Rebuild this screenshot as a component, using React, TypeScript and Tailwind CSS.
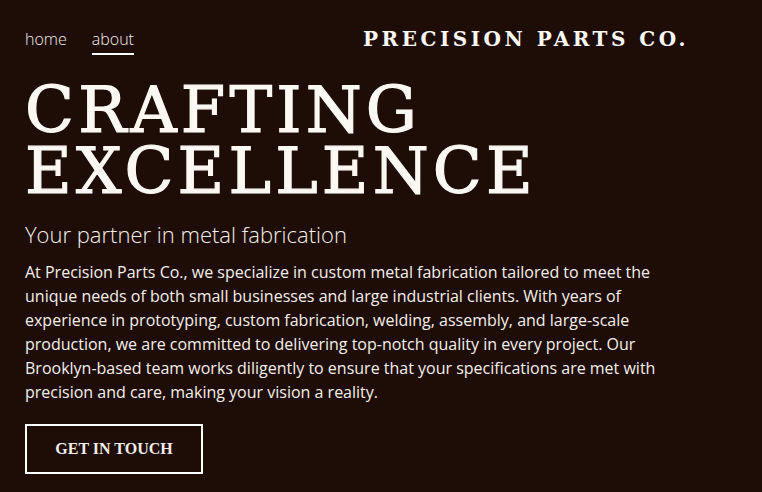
export default function App() {
  return (
    <div className="min-h-[492px] w-full overflow-hidden bg-[#1e0d06] text-white">
      <header className="flex items-start pl-[25px] pr-[73px] pt-[28px]">
        <nav className="flex gap-[25px] font-['Open_Sans',sans-serif] text-[16px] font-light text-[#f3ece6]">
          <a className="leading-[22px]">home</a>
          <a className="border-b-2 border-white pb-[3px] leading-[22px]">about</a>
        </nav>
        <div className="ml-auto font-['DejaVu_Serif',serif] text-[20px] font-bold leading-[22px] tracking-[0.175em] text-[#fbf8f4]">
          PRECISION PARTS CO.
        </div>
      </header>

      <main className="pl-[25px] pr-[40px]">
        <h1 className="mt-[25px] font-['DejaVu_Serif',serif] text-[64px] font-normal leading-[61px] tracking-[0.065em] text-[#fbf8f4] [-webkit-text-stroke:1.2px_#fbf8f4]">
          <span className="block">CRAFTING</span>
          <span className="block">EXCELLENCE</span>
        </h1>
        <p className="mt-[17px] font-['Open_Sans',sans-serif] text-[22px] font-light leading-[30px] text-[#f5efea]">
          Your partner in metal fabrication
        </p>
        <p className="mt-[11px] max-w-[660px] font-['Open_Sans',sans-serif] text-[16px] font-medium leading-[24px] text-[#f5efea]">
          At Precision Parts Co., we specialize in custom metal fabrication tailored to meet the unique needs of both small
          businesses and large industrial clients. With years of experience in prototyping, custom fabrication, welding,
          assembly, and large-scale production, we are committed to delivering top-notch quality in every project. Our
          Brooklyn-based team works diligently to ensure that your specifications are met with precision and care, making
          your vision a reality.
        </p>
        <button className="mt-[20px] h-[50px] w-[178px] border-2 border-white font-['Liberation_Serif',serif] text-[16px] font-bold text-[#f3ece6]">
          GET IN TOUCH
        </button>
      </main>
    </div>
  );
}
